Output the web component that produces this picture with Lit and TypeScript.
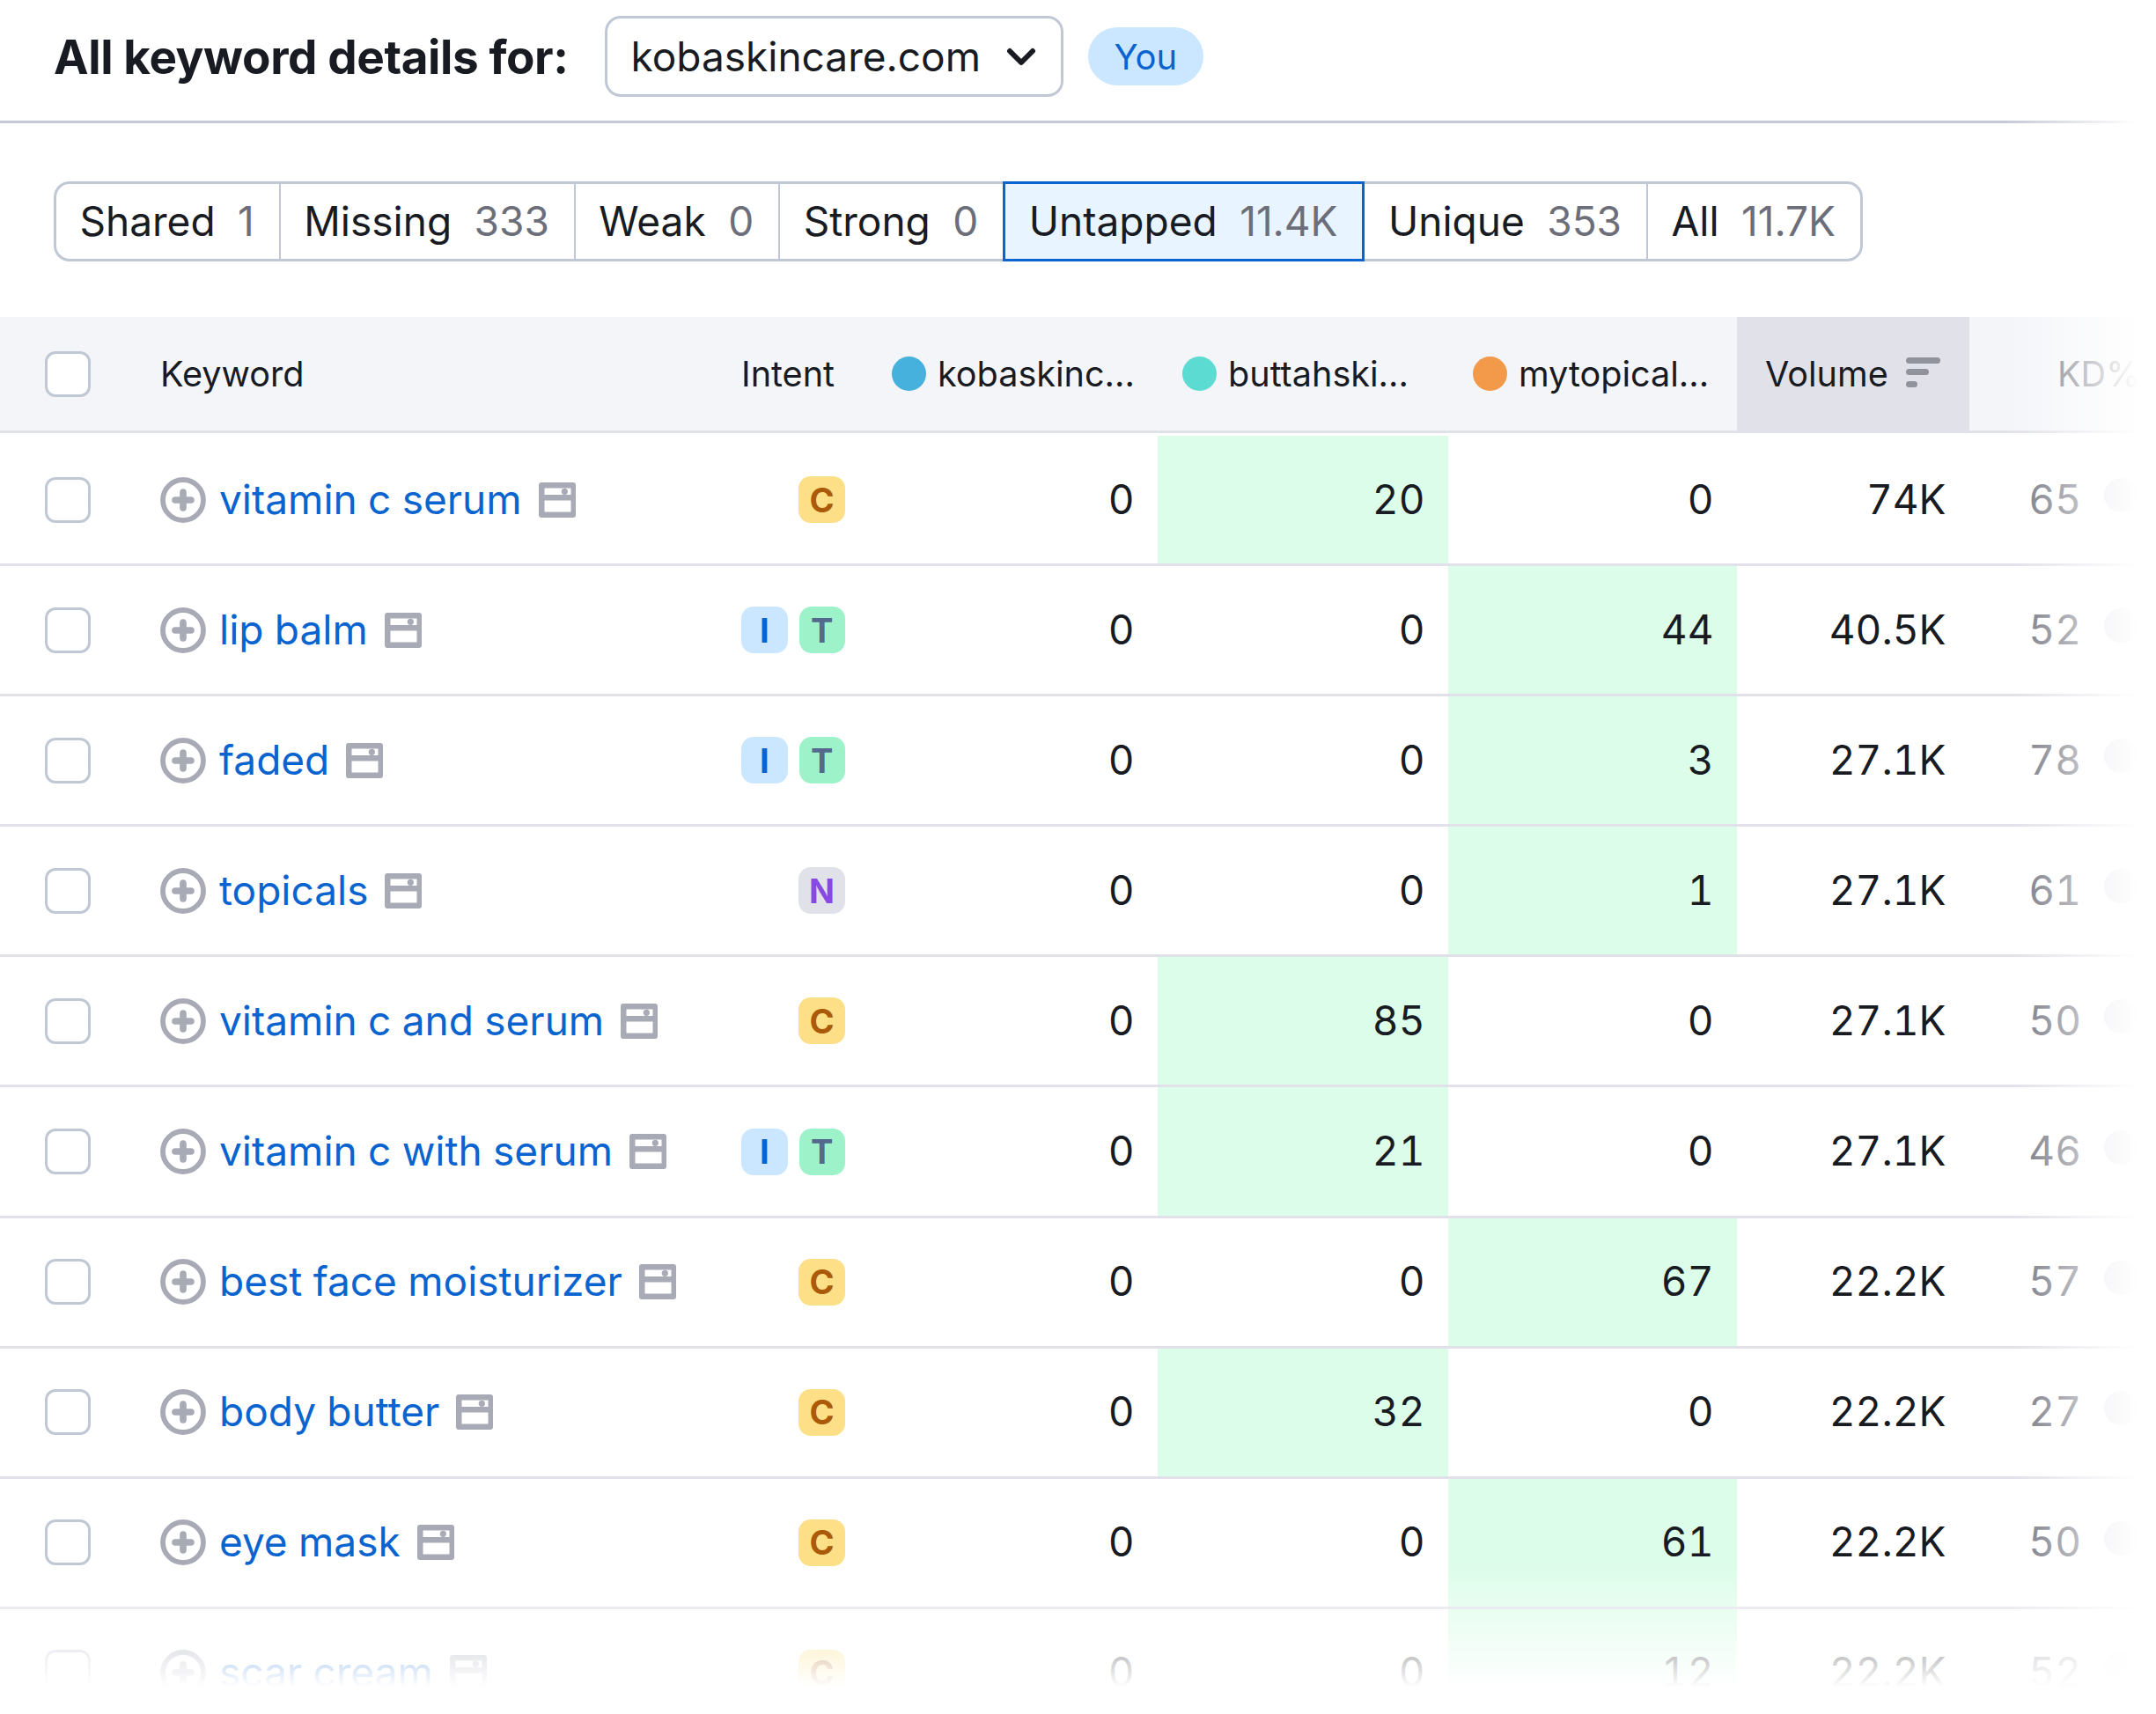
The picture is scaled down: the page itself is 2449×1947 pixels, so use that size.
import { LitElement, html, css } from "lit";
import { customElement } from "lit/decorators.js";

type Row = { kw: string; intents: string[]; a: number; b: number; c: number; hi: "b" | "c"; vol: string; kd: number };

const rows: Row[] = [
  { kw: "vitamin c serum", intents: ["C"], a: 0, b: 20, c: 0, hi: "b", vol: "74K", kd: 65 },
  { kw: "lip balm", intents: ["I", "T"], a: 0, b: 0, c: 44, hi: "c", vol: "40.5K", kd: 52 },
  { kw: "faded", intents: ["I", "T"], a: 0, b: 0, c: 3, hi: "c", vol: "27.1K", kd: 78 },
  { kw: "topicals", intents: ["N"], a: 0, b: 0, c: 1, hi: "c", vol: "27.1K", kd: 61 },
  { kw: "vitamin c and serum", intents: ["C"], a: 0, b: 85, c: 0, hi: "b", vol: "27.1K", kd: 50 },
  { kw: "vitamin c with serum", intents: ["I", "T"], a: 0, b: 21, c: 0, hi: "b", vol: "27.1K", kd: 46 },
  { kw: "best face moisturizer", intents: ["C"], a: 0, b: 0, c: 67, hi: "c", vol: "22.2K", kd: 57 },
  { kw: "body butter", intents: ["C"], a: 0, b: 32, c: 0, hi: "b", vol: "22.2K", kd: 27 },
  { kw: "eye mask", intents: ["C"], a: 0, b: 0, c: 61, hi: "c", vol: "22.2K", kd: 50 },
  { kw: "scar cream", intents: ["C"], a: 0, b: 0, c: 12, hi: "c", vol: "22.2K", kd: 52 },
];

const tabs = [
  ["Shared", "1"],
  ["Missing", "333"],
  ["Weak", "0"],
  ["Strong", "0"],
  ["Untapped", "11.4K"],
  ["Unique", "353"],
  ["All", "11.7K"],
];

const plusIcon = html`<svg class="plus" viewBox="0 0 52 52" fill="none" stroke="#a8abb6">
  <circle cx="26" cy="26" r="23" stroke-width="5.8"></circle>
  <path d="M26 17v18M17 26h18" stroke-width="7.6" stroke-linecap="round"></path>
</svg>`;

const serpIcon = html`<svg class="serp" viewBox="0 0 42 40">
  <path
    fill="#a8abb6"
    fill-rule="evenodd"
    d="M3 0h36a3 3 0 0 1 3 3v34a3 3 0 0 1-3 3H3a3 3 0 0 1-3-3V3a3 3 0 0 1 3-3zM6.5 6.5v7.5h30V6.500zM6.500 20.500V33.500h30V20.500z"
  ></path>
  <circle cx="29.300" cy="10.300" r="3.600" fill="#a8abb6"></circle>
</svg>`;

@customElement("app-root")
export class AppRoot extends LitElement {
  static styles = css`
    :host {
      display: block;
      position: relative;
      width: 2449px;
      height: 1947px;
      overflow: hidden;
      background: #fff;
      font-family: Inter, "Liberation Sans", sans-serif;
      font-size: 46px;
      color: #191b23;
    }
    .top {
      display: flex;
      align-items: center;
      height: 92px;
      padding: 18px 0 27px 61px;
      border-bottom: 3px solid #c4cad6;
    }
    .title {
      font-size: 53px;
      font-weight: 700;
      letter-spacing: -0.4px;
      margin: 2px 41px 0 0;
      white-space: nowrap;
    }
    .select {
      display: flex;
      align-items: center;
      box-sizing: border-box;
      width: 521px;
      height: 92px;
      padding-left: 27px;
      border: 3px solid #c1c8d5;
      border-radius: 18px;
      margin-right: 28px;
    }
    .select svg {
      width: 34px;
      height: 22px;
      margin-left: 29px;
    }
    .you {
      display: flex;
      align-items: center;
      height: 66px;
      padding: 0 30px;
      border-radius: 33px;
      background: #cbe7ff;
      color: #0a64cf;
      font-size: 40px;
    }
    .tabs {
      display: flex;
      margin: 66px 0 63px 61px;
      height: 91px;
    }
    .tab {
      display: flex;
      align-items: center;
      gap: 25.5px;
      box-sizing: border-box;
      padding: 0 28px 2px 26.5px;
      border: solid #c1c8d5;
      border-width: 3px 0 3px 2px;
      white-space: nowrap;
    }
    .tab:first-child {
      border-left-width: 3px;
      border-radius: 18px 0 0 18px;
    }
    .tab:last-child {
      border-right-width: 3px;
      border-radius: 0 18px 18px 0;
    }
    .tab.on {
      background: #e8f4ff;
      border: 3px solid #0a64cf;
    }
    .tab.on + .tab {
      border-left-width: 0;
    }
    .tab .n {
      color: #6c6e79;
    }
    .grid {
      display: grid;
      grid-template-columns: 182px 660px 143px 330px 330px 328px 264px 212px;
    }
    .head {
      height: 129px;
      background: #f4f5f9;
      border-bottom: 3px solid #e0e1e9;
      font-size: 39.6px;
      align-items: stretch;
    }
    .head > div {
      display: flex;
      align-items: center;
      white-space: nowrap;
    }
    .ck {
      padding-left: 51px;
    }
    .box {
      box-sizing: border-box;
      width: 52px;
      height: 52px;
      background: #fff;
      border: 3px solid #c1c8d5;
      border-radius: 12px;
    }
    .dot {
      width: 39px;
      height: 39px;
      border-radius: 50%;
      margin: 0 13.5px 0 27.5px;
      flex: none;
    }
    .vol {
      background: #e0e1e9;
      padding-left: 32px;
      gap: 20px;
    }
    .sort {
      width: 39px;
      height: 34px;
      margin-top: -4px;
    }
    .kdh {
      padding-left: 100px;
      color: #6c6e79;
    }
    .body {
      padding-top: 3px;
    }
    .row {
      height: 145.1px;
      border-bottom: 3px solid #e0e1e9;
      align-items: stretch;
      font-variant-numeric: tabular-nums;
    }
    .row > div {
      display: flex;
      align-items: center;
      min-width: 0;
    }
    .kw {
      gap: 15px;
      white-space: nowrap;
      color: #0a64cf;
    }
    .kw span {
      padding-bottom: 2px;
    }
    .plus {
      width: 52px;
      height: 52px;
      flex: none;
    }
    .serp {
      width: 42px;
      height: 40px;
      flex: none;
      margin-left: 4px;
    }
    .intent {
      justify-content: flex-end;
      gap: 13px;
      padding-right: 25px;
    }
    .badge {
      display: flex;
      align-items: center;
      justify-content: center;
      width: 53px;
      height: 53px;
      border-radius: 14px;
      font-size: 38px;
      font-weight: 700;
    }
    .C {
      background: #fcdf86;
      color: #ab5a0a;
    }
    .I {
      background: #cbe7ff;
      color: #0a64cf;
    }
    .T {
      background: #9ef2c9;
      color: #55698c;
    }
    .N {
      background: #e0e1e9;
      color: #8649e1;
    }
    .num {
      justify-content: flex-end;
      padding: 0 26.5px 2px 0;
    }
    .hi {
      background: #dcfde9;
    }
    .kd {
      color: #6c6e79;
    }
    .kd span {
      width: 127px;
      padding-bottom: 2px;
      text-align: right;
    }
    .kd i {
      display: block;
      width: 39px;
      height: 39px;
      margin: -10px 0 0 26px;
      border-radius: 50%;
      background: #e0e1e9;
    }
    .fade-r {
      position: absolute;
      top: 0;
      right: 0;
      bottom: 0;
      width: 170px;
      background: linear-gradient(to right, rgba(255, 255, 255, 0), #fff 88%);
    }
    .fade-b {
      position: absolute;
      left: 0;
      right: 0;
      bottom: 0;
      height: 170px;
      background: linear-gradient(to bottom, rgba(255, 255, 255, 0), #fff 82%);
    }
  `;

  render() {
    return html`
      <div class="top">
        <div class="title">All keyword details for:</div>
        <div class="select">
          kobaskincare.com
          <svg viewBox="0 0 34 22" fill="none" stroke="#191b23" stroke-width="6" stroke-linecap="round" stroke-linejoin="round">
            <path d="M4 5l13 13L30 5"></path>
          </svg>
        </div>
        <div class="you">You</div>
      </div>
      <div class="tabs">
        ${tabs.map(
          ([t, n]) => html`<div class="tab ${t === "Untapped" ? "on" : ""}">
            <span>${t}</span><span class="n">${n}</span>
          </div>`
        )}
      </div>
      <div class="grid head">
        <div class="ck"><div class="box"></div></div>
        <div>Keyword</div>
        <div>Intent</div>
        <div><span class="dot" style="background:#45b1dc"></span>kobaskinc...</div>
        <div><span class="dot" style="background:#5cdbd3"></span>buttahski...</div>
        <div><span class="dot" style="background:#f2994a"></span>mytopical...</div>
        <div class="vol">
          Volume
          <svg class="sort" viewBox="0 0 39 34" fill="#90929c">
            <rect width="39" height="7" rx="3.500"></rect>
            <rect y="13" width="26" height="7" rx="3.500"></rect>
            <rect y="27" width="13" height="7" rx="3.500"></rect>
          </svg>
        </div>
        <div class="kdh">KD%</div>
      </div>
      <div class="body">
        ${rows.map(
          (r) => html`<div class="grid row">
            <div class="ck"><div class="box"></div></div>
            <div class="kw">${plusIcon}<span>${r.kw}</span>${serpIcon}</div>
            <div class="intent">${r.intents.map((i) => html`<div class="badge ${i}">${i}</div>`)}</div>
            <div class="num">${r.a}</div>
            <div class="num ${r.hi === "b" ? "hi" : ""}">${r.b}</div>
            <div class="num ${r.hi === "c" ? "hi" : ""}">${r.c}</div>
            <div class="num">${r.vol}</div>
            <div class="kd"><span>${r.kd}</span><i></i></div>
          </div>`
        )}
      </div>
      <div class="fade-r"></div>
      <div class="fade-b"></div>
    `;
  }
}
